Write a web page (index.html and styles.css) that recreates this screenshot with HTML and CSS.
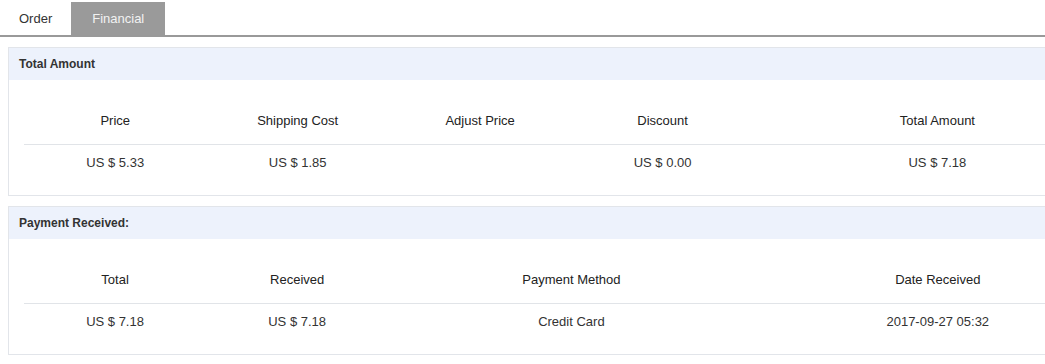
FILE: index.html
```html
<!DOCTYPE html>
<html lang="en">
<head>
<meta charset="UTF-8">
<title>Order Financial</title>
<link rel="stylesheet" href="styles.css">
</head>
<body>
<div class="page">
  <div class="tabs">
    <span class="tab">Order</span>
    <span class="tab active">Financial</span>
  </div>

  <div class="panel">
    <div class="panel-title">Total Amount</div>
    <div class="panel-body">
      <table class="grid">
        <colgroup>
          <col class="c1"><col class="c1"><col class="c1"><col class="c1"><col class="c2">
        </colgroup>
        <tr>
          <th>Price</th>
          <th>Shipping Cost</th>
          <th>Adjust Price</th>
          <th>Discount</th>
          <th>Total Amount</th>
        </tr>
        <tr>
          <td>US $ 5.33</td>
          <td>US $ 1.85</td>
          <td></td>
          <td>US $ 0.00</td>
          <td>US $ 7.18</td>
        </tr>
      </table>
    </div>
  </div>

  <div class="panel">
    <div class="panel-title">Payment Received:</div>
    <div class="panel-body">
      <table class="grid">
        <colgroup>
          <col class="c1"><col class="c1"><col class="c2"><col class="c2">
        </colgroup>
        <tr>
          <th>Total</th>
          <th>Received</th>
          <th>Payment Method</th>
          <th>Date Received</th>
        </tr>
        <tr>
          <td>US $ 7.18</td>
          <td>US $ 7.18</td>
          <td>Credit Card</td>
          <td>2017-09-27 05:32</td>
        </tr>
      </table>
    </div>
  </div>
</div>
</body>
</html>
```

FILE: styles.css
```css
html, body {
  margin: 0;
  background: #fff;
}
body {
  font-family: "Liberation Sans", Arial, sans-serif;
  font-size: 13px;
  color: #333;
}
.page {
  overflow: hidden;
}
.tabs {
  display: flex;
  padding-top: 2px;
  border-bottom: 2px solid #999;
}
.tab {
  height: 33px;
  line-height: 33px;
  padding: 0 19px;
  color: #333;
}
.tab.active {
  background: #9a9a9a;
  color: #f2f2f2;
  padding: 0 21px;
}
.panel {
  margin: 10px 0 0 8px;
  border: 1px solid #e2e5ea;
  border-right: none;
  overflow: hidden;
}
.panel-title {
  height: 32px;
  line-height: 32px;
  padding: 0 10px;
  background: #edf2fc;
  font-size: 12px;
  font-weight: bold;
  color: #333;
}
.panel-body {
  padding: 16px 0 16px 15px;
}
.grid {
  width: 1097px;
  border-collapse: collapse;
  table-layout: fixed;
}
.grid .c1 {
  width: 16.6%;
}
.grid .c2 {
  width: 33.4%;
}
.grid th {
  height: 48px;
  font-weight: normal;
  color: #222;
  text-align: center;
  border-bottom: 1px solid #e1e4e8;
  padding: 0;
}
.grid td {
  height: 34px;
  text-align: center;
  padding: 0;
  color: #333;
}
```
